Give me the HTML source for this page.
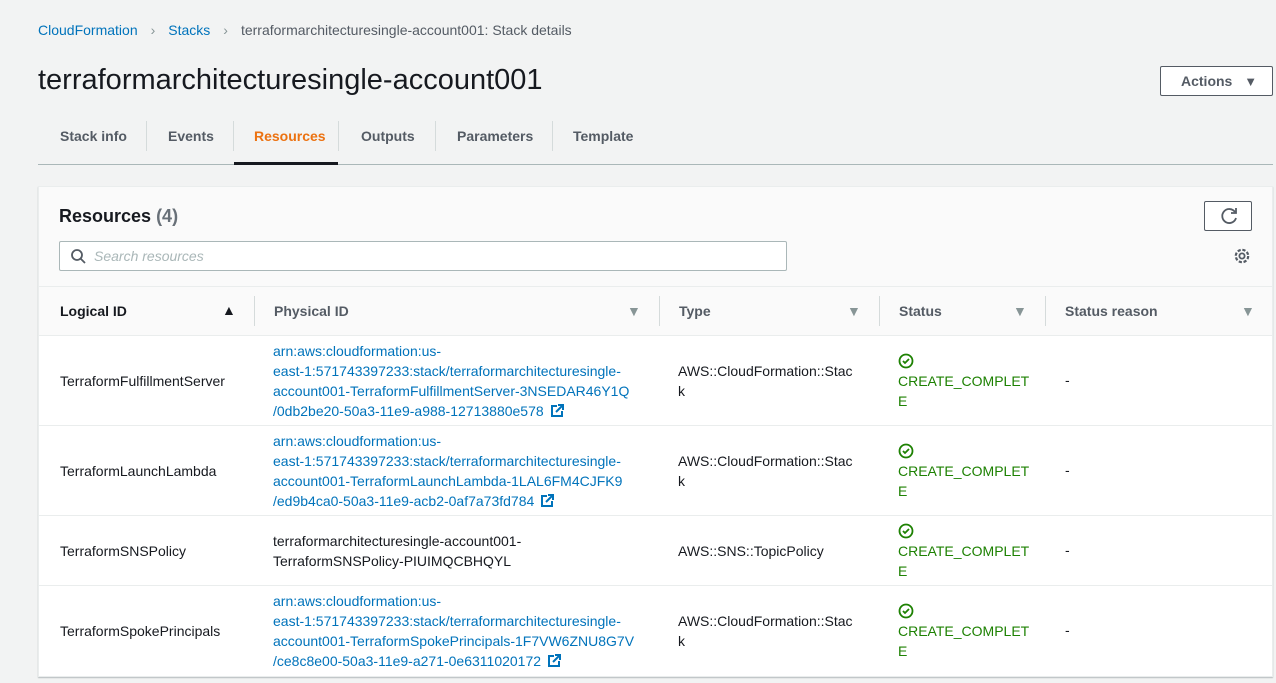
<!DOCTYPE html>
<html><head><meta charset="utf-8"><style>
*{margin:0;padding:0;box-sizing:border-box}
body{width:1276px;height:683px;overflow:hidden;background:#f2f3f3;font-family:"Liberation Sans",sans-serif;font-size:14px;color:#16191f;position:relative}
.a{position:absolute;white-space:nowrap}
.l{color:#0073bb}
.b{font-weight:bold}
.t{line-height:20px}
.hr{position:absolute;left:39px;width:1234px;height:1px;background:#eaeded}
.vd{position:absolute;width:1px;height:30px;background:#d5dbdb;top:296px}
.st{color:#1d8102}
.ext{display:inline-block;vertical-align:-2px;margin-left:6px}
.ar{font-size:14px;color:#879596}
</style></head><body>
<div class="a" style="left:38px;top:22px;font-size:14px"><span class="l">CloudFormation</span><span style="color:#879596;margin:0 13px">&#x203A;</span><span class="l">Stacks</span><span style="color:#879596;margin:0 13px">&#x203A;</span><span style="color:#545b64">terraformarchitecturesingle-account001: Stack details</span></div>
<div class="a" style="left:38px;top:64px;font-size:29px;color:#16191f">terraformarchitecturesingle-account001</div>
<div class="a" style="left:1160px;top:66px;width:113px;height:30px;border:1px solid #545b64;border-radius:2px;background:#fff;font-weight:bold;color:#545b64;padding:6px 0 0 20px">Actions <span style="font-size:13px;margin-left:8px">▼</span></div>
<div class="a b" style="left:60px;top:128px;color:#545b64">Stack info</div>
<div class="a b" style="left:168px;top:128px;color:#545b64">Events</div>
<div class="a b" style="left:254px;top:128px;color:#ec7211">Resources</div>
<div class="a b" style="left:361px;top:128px;color:#545b64">Outputs</div>
<div class="a b" style="left:457px;top:128px;color:#545b64">Parameters</div>
<div class="a b" style="left:573px;top:128px;color:#545b64">Template</div>
<div class="vd" style="left:146px;top:121px"></div><div class="vd" style="left:233px;top:121px"></div><div class="vd" style="left:338px;top:121px"></div><div class="vd" style="left:435px;top:121px"></div><div class="vd" style="left:552px;top:121px"></div>
<div class="a" style="left:38px;top:164px;width:1235px;height:1px;background:#aab7b8"></div>
<div class="a" style="left:234px;top:162px;width:104px;height:3px;background:#16191f"></div>
<div class="a" style="left:38px;top:186px;width:1235px;height:491px;background:#fff;border:1px solid #eaeded;box-shadow:0 1px 1px rgba(0,28,36,.25)"></div>
<div class="a" style="left:39px;top:187px;width:1233px;height:148px;background:#fafafa"></div>
<div class="a b" style="left:59px;top:206px;font-size:18px">Resources <span style="color:#687078">(4)</span></div>
<div class="a" style="left:1204px;top:201px;width:48px;height:30px;border:1px solid #545b64;border-radius:2px;background:#fff"><svg width="48" height="28" viewBox="0 0 48 28"><path d="M30 10a7 7 0 1 0 1 6" fill="none" stroke="#545b64" stroke-width="1.8"/><path d="M31 6v5h-5" fill="none" stroke="#545b64" stroke-width="1.8"/></svg></div>
<div class="a" style="left:59px;top:241px;width:728px;height:30px;border:1px solid #aab7b8;border-radius:2px;background:#fff"><svg class="a" style="left:10px;top:6px" width="16" height="16"><circle cx="7" cy="7" r="5" fill="none" stroke="#545b64" stroke-width="1.8"/><path d="M11 11l4 4" stroke="#545b64" stroke-width="1.8"/></svg><span class="a" style="left:34px;top:6px;font-style:italic;color:#aab7b8">Search resources</span></div>
<svg class="a" style="left:1232px;top:246px" width="20" height="20" viewBox="0 0 20 20"><circle cx="10" cy="10" r="2.6" fill="none" stroke="#545b64" stroke-width="1.8"/><circle cx="10" cy="10" r="6.2" fill="none" stroke="#545b64" stroke-width="2.2" stroke-dasharray="3.2 1.7"/></svg>
<div class="hr" style="top:286px"></div>
<div class="a b" style="left:60px;top:303px">Logical ID</div><div class="a" style="left:222px;top:302px;font-size:14px">▲</div>
<div class="vd" style="left:254px"></div>
<div class="a b" style="left:274px;top:303px;color:#545b64">Physical ID</div><div class="a ar" style="left:627px;top:303px">▼</div>
<div class="vd" style="left:659px"></div>
<div class="a b" style="left:679px;top:303px;color:#545b64">Type</div><div class="a ar" style="left:847px;top:303px">▼</div>
<div class="vd" style="left:879px"></div>
<div class="a b" style="left:899px;top:303px;color:#545b64">Status</div><div class="a ar" style="left:1013px;top:303px">▼</div>
<div class="vd" style="left:1045px"></div>
<div class="a b" style="left:1065px;top:303px;color:#545b64">Status reason</div><div class="a ar" style="left:1241px;top:303px">▼</div>
<div class="hr" style="top:335px"></div>
<div class="hr" style="top:425px"></div>
<div class="hr" style="top:515px"></div>
<div class="hr" style="top:585px"></div>

<div class="a" style="left:60px;top:373px">TerraformFulfillmentServer</div>
<div class="a t l" style="left:273px;top:341px">arn:aws:cloudformation:us-<br>east-1:571743397233:stack/terraformarchitecturesingle-<br>account001-TerraformFulfillmentServer-3NSEDAR46Y1Q<br>/0db2be20-50a3-11e9-a988-12713880e578<svg class="ext" width="14" height="14"><path d="M7 2H2v10h10V7M8 1h5v5M13 1L6 8" fill="none" stroke="#0073bb" stroke-width="2"/></svg></div>
<div class="a t" style="left:678px;top:361px">AWS::CloudFormation::Stac<br>k</div>
<div class="a t st" style="left:898px;top:351px"><svg width="16" height="16" style="vertical-align:-3px"><circle cx="8" cy="8" r="6.5" fill="none" stroke="#1d8102" stroke-width="1.8"/><path d="M5 8l2 2 4-4" fill="none" stroke="#1d8102" stroke-width="1.8"/></svg><br>CREATE_COMPLET<br>E</div>
<div class="a" style="left:1065px;top:372px">-</div>

<div class="a" style="left:60px;top:463px">TerraformLaunchLambda</div>
<div class="a t l" style="left:273px;top:431px">arn:aws:cloudformation:us-<br>east-1:571743397233:stack/terraformarchitecturesingle-<br>account001-TerraformLaunchLambda-1LAL6FM4CJFK9<br>/ed9b4ca0-50a3-11e9-acb2-0af7a73fd784<svg class="ext" width="14" height="14"><path d="M7 2H2v10h10V7M8 1h5v5M13 1L6 8" fill="none" stroke="#0073bb" stroke-width="2"/></svg></div>
<div class="a t" style="left:678px;top:451px">AWS::CloudFormation::Stac<br>k</div>
<div class="a t st" style="left:898px;top:441px"><svg width="16" height="16" style="vertical-align:-3px"><circle cx="8" cy="8" r="6.5" fill="none" stroke="#1d8102" stroke-width="1.8"/><path d="M5 8l2 2 4-4" fill="none" stroke="#1d8102" stroke-width="1.8"/></svg><br>CREATE_COMPLET<br>E</div>
<div class="a" style="left:1065px;top:462px">-</div>

<div class="a" style="left:60px;top:543px">TerraformSNSPolicy</div>
<div class="a t" style="left:273px;top:531px">terraformarchitecturesingle-account001-<br>TerraformSNSPolicy-PIUIMQCBHQYL</div>
<div class="a" style="left:678px;top:543px">AWS::SNS::TopicPolicy</div>
<div class="a t st" style="left:898px;top:521px"><svg width="16" height="16" style="vertical-align:-3px"><circle cx="8" cy="8" r="6.5" fill="none" stroke="#1d8102" stroke-width="1.8"/><path d="M5 8l2 2 4-4" fill="none" stroke="#1d8102" stroke-width="1.8"/></svg><br>CREATE_COMPLET<br>E</div>
<div class="a" style="left:1065px;top:542px">-</div>

<div class="a" style="left:60px;top:623px">TerraformSpokePrincipals</div>
<div class="a t l" style="left:273px;top:591px">arn:aws:cloudformation:us-<br>east-1:571743397233:stack/terraformarchitecturesingle-<br>account001-TerraformSpokePrincipals-1F7VW6ZNU8G7V<br>/ce8c8e00-50a3-11e9-a271-0e6311020172<svg class="ext" width="14" height="14"><path d="M7 2H2v10h10V7M8 1h5v5M13 1L6 8" fill="none" stroke="#0073bb" stroke-width="2"/></svg></div>
<div class="a t" style="left:678px;top:611px">AWS::CloudFormation::Stac<br>k</div>
<div class="a t st" style="left:898px;top:601px"><svg width="16" height="16" style="vertical-align:-3px"><circle cx="8" cy="8" r="6.5" fill="none" stroke="#1d8102" stroke-width="1.8"/><path d="M5 8l2 2 4-4" fill="none" stroke="#1d8102" stroke-width="1.8"/></svg><br>CREATE_COMPLET<br>E</div>
<div class="a" style="left:1065px;top:622px">-</div>
</body></html>
